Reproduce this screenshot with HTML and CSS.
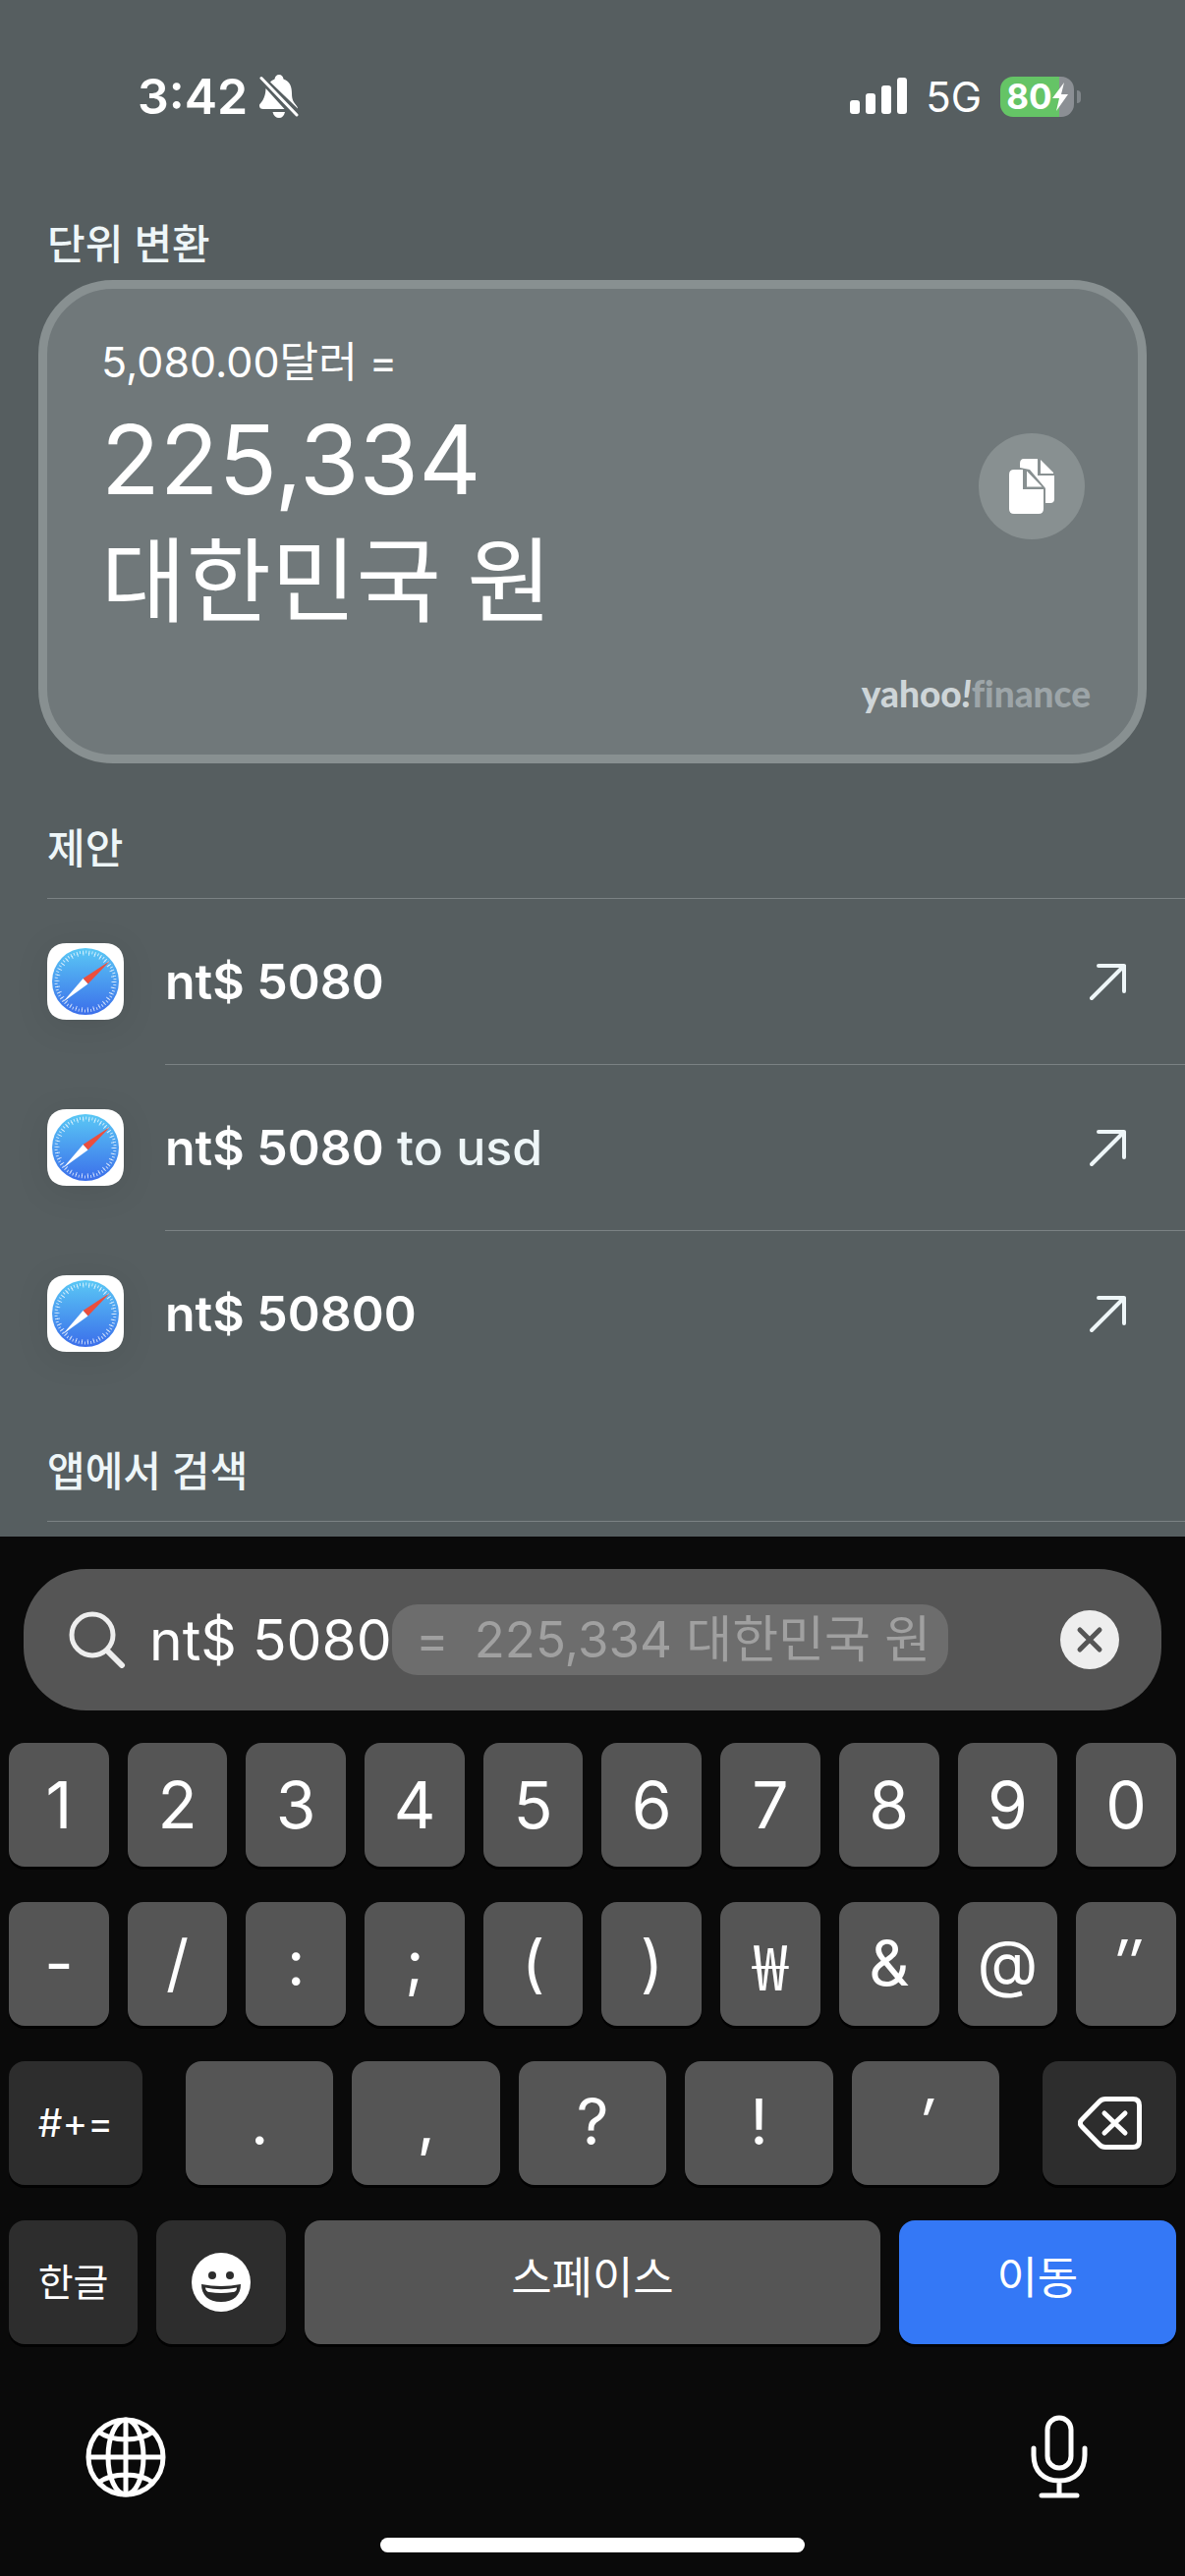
FILE: index.html
```html
<!DOCTYPE html>
<html lang="ko">
<head>
    <meta charset="UTF-8">
    <meta name="viewport" content="width=device-width, initial-scale=1.0">
    <title>Spotlight</title>
    <link rel="stylesheet" href="styles.css">
</head>
<body>
    <!-- Shared icons -->
    <svg class="sprite" aria-hidden="true">
        <defs>
            <linearGradient id="safariBlue" x1="0" y1="0" x2="0" y2="1">
                <stop offset="0" stop-color="#5ac8f5"/>
                <stop offset="1" stop-color="#3b6eea"/>
            </linearGradient>
        </defs>
        <symbol id="safari" viewBox="0 0 78 78">
            <path d="M20 0H58C71 0 78 7 78 20V58C78 71 71 78 58 78H20C7 78 0 71 0 58V20C0 7 7 0 20 0Z" fill="#fff"/>
            <circle cx="39" cy="39" r="34" fill="url(#safariBlue)"/>
            <circle cx="39" cy="39" r="30" fill="none" stroke="#fff" stroke-opacity="0.7" stroke-width="3" stroke-dasharray="1 2.142"/>
            <circle cx="39" cy="39" r="28" fill="none" stroke="#fff" stroke-opacity="0.7" stroke-width="3" stroke-dasharray="1 4.864"/>
            <path d="M64 18 36.500 36 41.500 41.500Z" fill="#eb4e3d"/>
            <path d="M16 60 36.500 36 41.500 41.500Z" fill="#fff"/>
        </symbol>
        <symbol id="arrow" viewBox="0 0 40 40">
            <path d="M3 37 36 4M10 4H36V30" fill="none" stroke="currentColor" stroke-width="4" stroke-linecap="round" stroke-linejoin="round"/>
        </symbol>
    </svg>

    <!-- Status Bar -->
    <header class="status-bar">
        <div class="status-group">
            <span class="time">3:42</span>
            <svg class="bell" viewBox="0 0 40 44" fill="#fff" aria-hidden="true">
                <path d="M11 7.500C13 5.500 14.500 5 15.500 4.500 16 1.500 17.500 0 20 0S24 1.500 24.500 4.500C31 7 33 12 33 19 33 26 35 28 38 32Q39 33 39 34.500Z"/>
                <path d="M6.500 14 25.500 35H4Q0 35 0 31.500C0 29 6 27 6.500 14Z"/>
                <path d="M13.500 38H26C25 42 23 44 20 44S14.500 42 13.500 38Z"/>
                <path d="M2 3.500 38 41" stroke="#fff" stroke-width="3" stroke-linecap="round"/>
            </svg>
        </div>
        <div class="status-group status-right">
            <svg class="signal" viewBox="0 0 58 38" fill="#fff" aria-hidden="true">
                <rect x="0" y="23" width="10" height="14" rx="3"/>
                <rect x="16" y="16" width="10" height="21" rx="3"/>
                <rect x="32" y="8" width="10" height="29" rx="3"/>
                <rect x="48" y="0" width="10" height="37" rx="3"/>
            </svg>
            <span class="network">5G</span>
            <div class="battery">
                <span>80</span>
                <svg class="bolt" viewBox="0 0 16 29" fill="#fff" aria-hidden="true">
                    <path d="M12 0 0 16H7L4 29 16 12H9Z"/>
                </svg>
            </div>
        </div>
    </header>

    <!-- Search Results -->
    <main class="results">
        <h2 class="section-title">단위 변환</h2>
        <div class="card">
            <div class="card-row">
                <div>
                    <div class="source">5,080.00달러 =</div>
                    <div class="amount">225,334</div>
                    <div class="currency">대한민국 원</div>
                </div>
                <button class="copy-btn" aria-label="복사">
                    <svg viewBox="0 0 46 56" aria-hidden="true">
                        <path d="M15 0H29V17H46V41Q46 45 42 45H37V30L21 11 11 9V5Q11 0 15 0Z" fill="#fff"/>
                        <path d="M32 1 45 14V15H32Z" fill="#fff"/>
                        <path d="M5 11H14V31H35V51Q35 56 30 56H5Q0 56 0 51V16Q0 11 5 11Z" fill="#fff"/>
                        <path d="M18 12.500 33.500 28.500H18Z" fill="#fff"/>
                    </svg>
                </button>
            </div>
            <div class="provider">yahoo<i>!</i><span>finance</span></div>
        </div>

        <h2 class="section-title suggest-title">제안</h2>
        <ul class="suggestions">
            <li>
                <a href="#">
                    <svg class="app-icon"><use href="#safari"/></svg>
                    <span class="label"><b>nt$ 5080</b></span>
                    <svg class="arrow"><use href="#arrow"/></svg>
                </a>
            </li>
            <li>
                <a href="#">
                    <svg class="app-icon"><use href="#safari"/></svg>
                    <span class="label"><b>nt$ 5080</b> to usd</span>
                    <svg class="arrow"><use href="#arrow"/></svg>
                </a>
            </li>
            <li>
                <a href="#">
                    <svg class="app-icon"><use href="#safari"/></svg>
                    <span class="label"><b>nt$ 50800</b></span>
                    <svg class="arrow"><use href="#arrow"/></svg>
                </a>
            </li>
        </ul>

        <h2 class="section-title apps-title">앱에서 검색</h2>
        <hr class="divider">
    </main>

    <!-- Search Field and Keyboard -->
    <div class="keyboard">
        <div class="search">
            <svg class="search-icon" viewBox="0 0 58 58" fill="none" stroke="#eee" aria-hidden="true">
                <circle cx="24" cy="24" r="21" stroke-width="5"/>
                <path d="M39 40 54 55" stroke-width="6" stroke-linecap="round"/>
            </svg>
            <input class="query" type="text" value="nt$ 5080" aria-label="검색">
            <div class="completion"><span>=</span><span>225,334 대한민국 원</span></div>
            <button class="clear-btn" aria-label="지우기">
                <svg viewBox="0 0 60 60" aria-hidden="true">
                    <path d="M20 20 40 40M40 20 20 40" stroke="#555" stroke-width="5" stroke-linecap="round"/>
                </svg>
            </button>
        </div>

        <div class="key-row">
            <button class="key">1</button>
            <button class="key">2</button>
            <button class="key">3</button>
            <button class="key">4</button>
            <button class="key">5</button>
            <button class="key">6</button>
            <button class="key">7</button>
            <button class="key">8</button>
            <button class="key">9</button>
            <button class="key">0</button>
        </div>
        <div class="key-row">
            <button class="key symbol">-</button>
            <button class="key symbol">/</button>
            <button class="key symbol">:</button>
            <button class="key symbol">;</button>
            <button class="key symbol">(</button>
            <button class="key symbol">)</button>
            <button class="key symbol won">₩</button>
            <button class="key symbol">&amp;</button>
            <button class="key symbol">@</button>
            <button class="key symbol"><i>″</i></button>
        </div>
        <div class="key-row punctuation">
            <button class="key dark small">#+=</button>
            <div class="key-group">
                <button class="key symbol">.</button>
                <button class="key symbol">,</button>
                <button class="key symbol">?</button>
                <button class="key symbol">!</button>
                <button class="key symbol"><i>′</i></button>
            </div>
            <button class="key dark" aria-label="삭제">
                <svg class="backspace" viewBox="0 0 65 54" fill="none" stroke="#fff" stroke-linecap="round" stroke-linejoin="round" aria-hidden="true">
                    <path d="M28 2.500H56Q62.500 2.500 62.500 9V45Q62.500 51.500 56 51.500H28Q24.500 51.500 22 49L4 30.500Q0.500 27 4 23.500L22 5Q24.500 2.500 28 2.500Z" stroke-width="5"/>
                    <path d="M27 17 48 37M48 17 27 37" stroke-width="5"/>
                </svg>
            </button>
        </div>
        <div class="key-row bottom-row">
            <button class="key dark small">한글</button>
            <button class="key dark" aria-label="이모티콘">
                <svg class="emoji" viewBox="0 0 60 60" aria-hidden="true">
                    <circle cx="30" cy="30" r="30" fill="#fff"/>
                    <circle cx="21" cy="23" r="4" fill="#2d2d2d"/>
                    <circle cx="39" cy="23" r="4" fill="#2d2d2d"/>
                    <path d="M10 32Q30 36 50 32C50 43 43 50 30 50S10 43 10 32Z" fill="#2d2d2d"/>
                    <path d="M14 35.500Q30 39 46 35.500C46 39 44 40 42 40Q30 42 18 40C16 40 14 38 14 35.500Z" fill="#fff"/>
                </svg>
            </button>
            <button class="key word">스페이스</button>
            <button class="key go word">이동</button>
        </div>

        <div class="dock">
            <button class="dock-btn" aria-label="다음 키보드">
                <svg class="globe" viewBox="0 0 82 82" fill="none" stroke="#fff" stroke-width="5" aria-hidden="true">
                    <circle cx="41" cy="41" r="38"/>
                    <ellipse cx="41" cy="41" rx="18" ry="38"/>
                    <path d="M41 2V80M2 41H80M13 15Q24 23 41 23T69 15M13 67Q24 59 41 59T69 67"/>
                </svg>
            </button>
            <button class="dock-btn" aria-label="받아쓰기">
                <svg class="mic" viewBox="0 0 58 86" fill="none" stroke="#fff" stroke-width="5" stroke-linecap="round" aria-hidden="true">
                    <rect x="17" y="3" width="24" height="51" rx="12"/>
                    <path d="M3 34V41C3 57 13 67 29 67S55 57 55 41V34M29 67V82M11 82H47"/>
                </svg>
            </button>
        </div>
        <div class="home-bar"></div>
    </div>
</body>
</html>
```
FILE: styles.css
```css
/* General Styles */
* {
    box-sizing: border-box;
}

body {
    font-family: Inter, 'Noto Sans CJK KR', sans-serif;
    margin: 0;
    min-height: 100vh;
    display: flex;
    flex-direction: column;
    background-color: #565e60;
    color: white;
}

button,
input {
    font-family: inherit;
    color: inherit;
    border: none;
    padding: 0;
    margin: 0;
    background: none;
}

button {
    cursor: pointer;
}

svg {
    display: block;
    flex: none;
}

.sprite {
    position: absolute;
    width: 0;
    height: 0;
}

/* Status Bar */
.status-bar {
    display: flex;
    justify-content: space-between;
    align-items: center;
    height: 196px;
    padding: 0 113px 0 140px;
}

.status-group {
    display: flex;
    align-items: center;
    gap: 12px;
}

.status-right {
    gap: 19px;
}

.time {
    font-size: 50px;
    font-weight: 600;
}

.bell {
    width: 40px;
    height: 44px;
}

.signal {
    width: 58px;
    height: 38px;
}

.network {
    font-size: 42px;
}

.battery {
    position: relative;
    display: flex;
    align-items: center;
    justify-content: center;
    width: 75px;
    height: 41px;
    border-radius: 13px;
    background: linear-gradient(to right, #65c466 80%, #8b8f94 80%);
    font-size: 35px;
    font-weight: 700;
}

.battery::after {
    content: '';
    position: absolute;
    right: -7px;
    top: 14px;
    width: 4px;
    height: 13px;
    border-radius: 0 4px 4px 0;
    background-color: #80868a;
}

.bolt {
    width: 16px;
    height: 29px;
}

/* Results */
.results {
    flex: 1;
    overflow: hidden;
}

.section-title {
    margin: 0;
    padding: 21px 48px 4px;
    font-size: 42px;
    font-weight: 500;
    line-height: 64px;
    color: #eef6f8;
}

.suggest-title,
.apps-title {
    padding-bottom: 18px;
}

.suggest-title {
    padding-top: 55px;
}

.apps-title {
    padding-top: 45px;
}

/* Conversion Card */
.card {
    margin: 0 39px;
    padding: 42px 54px 40px 55px;
    border: 9px solid #889091;
    border-radius: 76px;
    background-color: #70787a;
}

.card-row {
    display: flex;
    justify-content: space-between;
    align-items: center;
}

.source {
    font-size: 43px;
    line-height: 64px;
}

.amount {
    font-size: 98px;
    line-height: 136px;
}

.currency {
    font-size: 94px;
    line-height: 112px;
}

.copy-btn {
    display: flex;
    align-items: center;
    justify-content: center;
    width: 108px;
    height: 108px;
    margin-top: 6px;
    border-radius: 50%;
    background-color: #889091;
}

.copy-btn svg {
    width: 46px;
    height: 56px;
}

.provider {
    margin: 36px -6px 0 0;
    font-family: Lato, sans-serif;
    font-size: 37px;
    font-weight: 900;
    font-variant-ligatures: none;
    line-height: 44px;
    text-align: right;
    color: #ced5d8;
}

.provider span {
    color: #9da5a8;
}

/* Suggestions */
.suggestions {
    list-style: none;
    margin: 0;
    padding: 0 0 0 48px;
}

.suggestions a {
    display: flex;
    align-items: center;
    color: #eef6f8;
    text-decoration: none;
}

.suggestions li:first-child,
.divider {
    border-top: 1px solid #7b8284;
}

.app-icon {
    width: 78px;
    height: 78px;
    margin-right: 42px;
    filter: drop-shadow(0 6px 16px rgba(0, 0, 0, 0.08));
}

.label {
    flex: 1;
    font-size: 50px;
    font-weight: 500;
    line-height: 168px;
}

.label b {
    font-weight: 600;
    color: white;
}

.suggestions li + li .label,
.suggestions li + li .arrow {
    border-top: 1px solid #7b8284;
}

.arrow {
    box-sizing: content-box;
    width: 40px;
    height: 40px;
    padding: 64px 58px 64px 0;
}

.divider {
    margin: 0 0 15px 48px;
    border-width: 1px 0 0;
}

/* Search Field */
.keyboard {
    padding: 33px 9px 24px;
    background-color: #0a0a0a;
}

.search {
    display: flex;
    align-items: center;
    height: 144px;
    margin: 0 15px 33px;
    padding: 0 43px 0 46px;
    border-radius: 64px;
    background-color: #555;
}

.search-icon {
    width: 58px;
    height: 58px;
    margin-right: 24px;
}

.query {
    width: 247px;
    font-size: 57px;
    outline: none;
}

.completion {
    display: flex;
    gap: 26px;
    padding: 0 18px 0 24px;
    border-radius: 26px;
    background-color: #6d6d6d;
    color: #a0a0a0;
    font-size: 51px;
    line-height: 72px;
    white-space: nowrap;
}

.clear-btn {
    width: 60px;
    height: 60px;
    margin-left: auto;
    border-radius: 50%;
    background-color: #eee;
}

/* Keys */
.key-row {
    display: grid;
    grid-template-columns: repeat(10, 1fr);
    gap: 19px;
    margin-bottom: 36px;
}

.key {
    display: flex;
    align-items: center;
    justify-content: center;
    height: 126px;
    border-radius: 16px;
    background-color: #555;
    box-shadow: 0 3px 0 #020202;
    font-size: 66px;
    line-height: 80px;
}

.symbol {
    padding-bottom: 2px;
    font-size: 64px;
}

.won {
    font-family: 'Noto Sans CJK KR', sans-serif;
}

.punctuation {
    grid-template-columns: 136fr 828fr 136fr;
    gap: 44px;
}

.key-group {
    display: grid;
    grid-template-columns: repeat(5, 1fr);
    gap: 19px;
}

.bottom-row {
    grid-template-columns: 131fr 132fr 585fr 282fr;
}

.dark {
    background-color: #2d2d2d;
}

.small {
    font-size: 39px;
}

.word {
    padding-bottom: 8px;
    font-size: 45px;
}

.go {
    background-color: #3478f6;
}

.backspace {
    width: 65px;
    height: 54px;
}

.emoji {
    width: 60px;
    height: 60px;
}

/* Dock */
.dock {
    display: flex;
    justify-content: space-between;
    align-items: center;
    padding: 36px 90px 39px 78px;
}

.globe {
    width: 82px;
    height: 82px;
}

.mic {
    width: 58px;
    height: 86px;
}

.home-bar {
    width: 432px;
    height: 15px;
    margin: 0 auto;
    border-radius: 8px;
    background-color: white;
}
```
